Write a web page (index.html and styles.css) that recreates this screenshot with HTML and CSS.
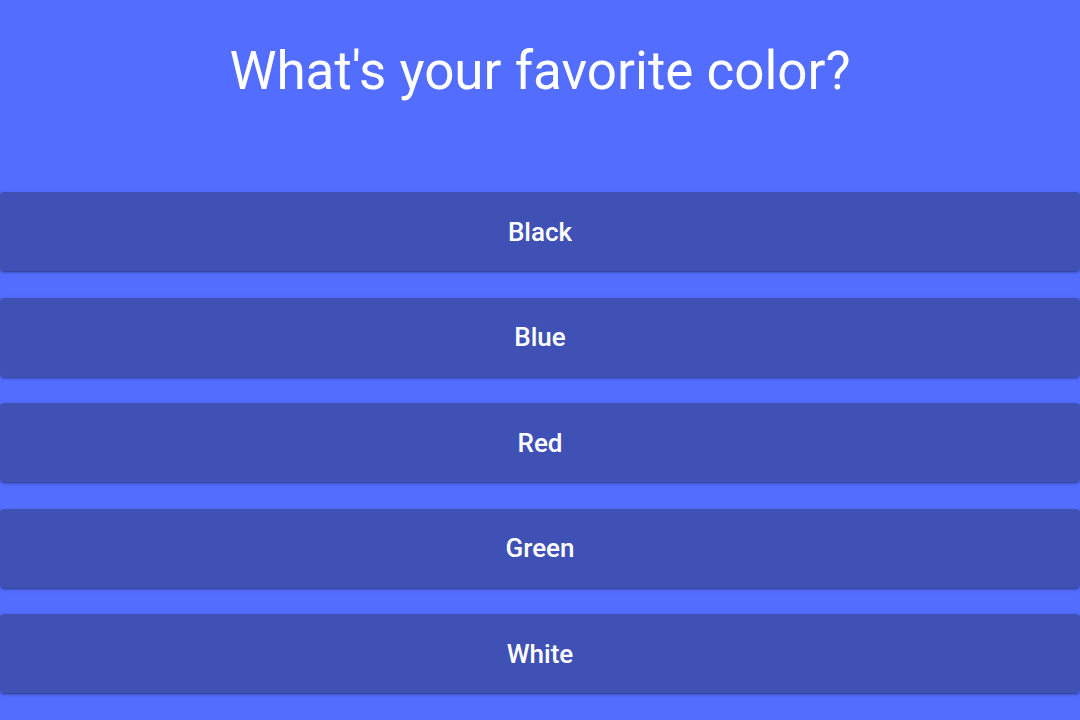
FILE: index.html
```html
<!DOCTYPE html>
<html>
<head>
<meta charset="utf-8">
<link rel="stylesheet" href="styles.css">
</head>
<body>
<div class="page">
  <h1 class="question">What's your favorite color?</h1>
  <div class="answers">
    <button class="answer">Black</button>
    <button class="answer">Blue</button>
    <button class="answer">Red</button>
    <button class="answer">Green</button>
    <button class="answer">White</button>
  </div>
</div>
</body>
</html>
```
FILE: styles.css
```css
html, body {
  margin: 0;
  padding: 0;
  background: #536dfe;
  font-family: Roboto, "Liberation Sans", sans-serif;
}
.page {
  display: flex;
  flex-direction: column;
  height: 720px;
}
.question {
  margin: 0;
  padding-top: 39px;
  height: 192px;
  flex-shrink: 0;
  box-sizing: border-box;
  font-size: 53px;
  line-height: 64px;
  font-weight: 400;
  color: #ffffff;
  text-align: center;
}
.answers {
  display: flex;
  flex-direction: column;
  gap: 26.5px;
}
.answer {
  height: 79px;
  flex-shrink: 0;
  border: none;
  border-radius: 4px;
  background: #3f51b5;
  color: #ffffff;
  font-family: Roboto, "Liberation Sans", sans-serif;
  font-size: 26px;
  font-weight: 500;
  box-shadow: 0 3px 1px -2px rgba(0,0,0,0.2), 0 2px 2px 0 rgba(0,0,0,0.14), 0 1px 5px 0 rgba(0,0,0,0.12);
  padding: 0;
}
```
